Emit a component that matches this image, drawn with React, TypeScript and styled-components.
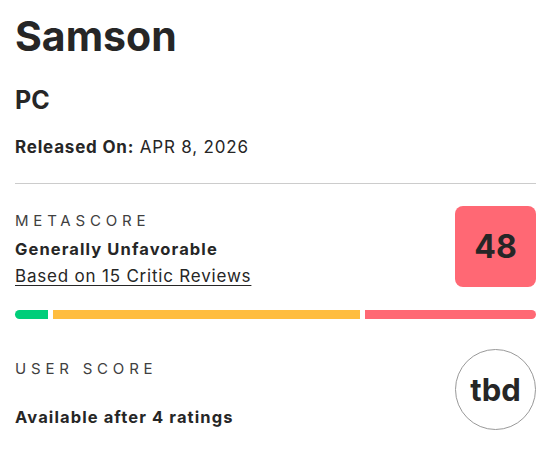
import React from "react";
import styled, { createGlobalStyle } from "styled-components";

const GlobalStyle = createGlobalStyle`
  body {
    margin: 0;
    background: #ffffff;
    font-family: Inter, "Liberation Sans", sans-serif;
    color: #262626;
  }
`;

const Page = styled.div`
  padding: 10px 14px 0 15px;
`;

const Title = styled.h1`
  margin: 0;
  font-size: 41px;
  font-weight: 700;
  line-height: 52px;
`;

const Platform = styled.h2`
  margin: 23px 0 0;
  font-size: 25px;
  font-weight: 700;
  line-height: 30px;
`;

const Release = styled.div`
  margin-top: 21px;
  font-size: 17px;
  line-height: 22px;
  letter-spacing: 0.8px;

  b {
    font-weight: 700;
  }
`;

const Divider = styled.hr`
  margin: 25px 0 0;
  border: none;
  border-top: 1px solid #cccccc;
`;

const ScoreRow = styled.div<{ $top: number }>`
  display: flex;
  justify-content: space-between;
  align-items: flex-start;
  margin-top: ${(p) => p.$top}px;
`;

const Info = styled.div<{ $pad: number }>`
  display: flex;
  flex-direction: column;
  padding-top: ${(p) => p.$pad}px;
`;

const Label = styled.div`
  font-size: 15px;
  line-height: 20px;
  letter-spacing: 4.8px;
  color: #404040;
  text-transform: uppercase;
`;

const Verdict = styled.div<{ $top: number }>`
  margin-top: ${(p) => p.$top}px;
  font-size: 16.5px;
  font-weight: 700;
  line-height: 20px;
  letter-spacing: 1.1px;
`;

const Reviews = styled.a`
  margin-top: 6px;
  font-size: 17px;
  line-height: 22px;
  letter-spacing: 0.8px;
  color: #262626;
  text-decoration: underline;
  text-underline-offset: 3px;
`;

const ScoreBox = styled.div<{ $color: string }>`
  width: 81px;
  height: 81px;
  border-radius: 8px;
  background: ${(p) => p.$color};
  display: flex;
  align-items: center;
  justify-content: center;
  font-size: 32px;
  font-weight: 700;
`;

const ScoreCircle = styled.div`
  width: 79px;
  height: 79px;
  border-radius: 50%;
  border: 1px solid #999999;
  display: flex;
  align-items: center;
  justify-content: center;
  font-size: 31px;
  font-weight: 700;
`;

const Bar = styled.div`
  display: flex;
  gap: 5px;
  margin-top: 23px;
  height: 9px;
`;

const Segment = styled.div<{ $color: string; $grow: number }>`
  flex: ${(p) => p.$grow} 1 0;
  background: ${(p) => p.$color};

  &:first-child {
    border-radius: 5px 0 0 5px;
  }
  &:last-child {
    border-radius: 0 5px 5px 0;
  }
`;

const segments = [
  { color: "#00ce7a", share: 33 },
  { color: "#ffbd3f", share: 307 },
  { color: "#ff6874", share: 171 },
];

export default function App() {
  return (
    <>
      <GlobalStyle />
      <Page>
        <Title>Samson</Title>
        <Platform>PC</Platform>
        <Release>
          <b>Released On:</b> APR 8, 2026
        </Release>
        <Divider />
        <ScoreRow $top={22}>
          <Info $pad={5}>
            <Label>Metascore</Label>
            <Verdict $top={8}>Generally Unfavorable</Verdict>
            <Reviews>Based on 15 Critic Reviews</Reviews>
          </Info>
          <ScoreBox $color="#ff6874">48</ScoreBox>
        </ScoreRow>
        <Bar>
          {segments.map((s) => (
            <Segment key={s.color} $color={s.color} $grow={s.share} />
          ))}
        </Bar>
        <ScoreRow $top={30}>
          <Info $pad={10}>
            <Label>User Score</Label>
            <Verdict $top={28}>Available after 4 ratings</Verdict>
          </Info>
          <ScoreCircle>tbd</ScoreCircle>
        </ScoreRow>
      </Page>
    </>
  );
}
